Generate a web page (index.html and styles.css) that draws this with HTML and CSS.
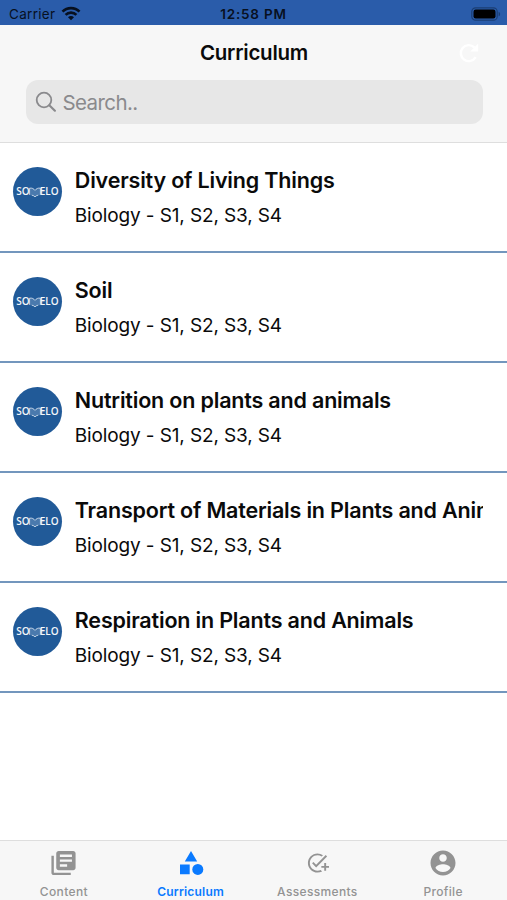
FILE: index.html
```html
<!DOCTYPE html>
<html lang="en">
<head>
<meta charset="utf-8">
<title>Curriculum</title>
<link rel="stylesheet" href="styles.css">
</head>
<body>
<svg width="0" height="0" class="defs">
  <symbol id="book" viewBox="0 0 13 12">
    <path d="M.6 1.300c2.800-.5 4.500.6 5.900 2.400 1.400-1.800 3.100-2.900 5.900-2.400v7.600c-2.500-.1-4.500.5-5.900 1.900-1.400-1.400-3.400-2-5.900-1.900z" fill="#4a79ad"/>
    <path d="M.6 8.500V1.300c2.800-.5 4.500.6 5.900 2.400 1.400-1.800 3.100-2.900 5.900-2.400v7.200M3 8.900c1.500.2 2.600.8 3.500 1.900.9-1.100 2-1.700 3.500-1.900" fill="none" stroke="#dce6f0" stroke-width=".9"/>
  </symbol>
</svg>
<div class="app">
  <div class="status">
    <div class="carrier">Carrier
      <svg width="20" height="15" viewBox="0 0 20 15" fill="none" stroke="#07101f" stroke-width="2.700"><path d="M1.500 5.600a12 12 0 0 1 17 0M4.600 8.900a7.600 7.600 0 0 1 10.800 0"/><path d="M10 14.200l-3-3a4.200 4.200 0 0 1 6 0z" fill="#07101f" stroke="none"/></svg>
    </div>
    <div class="time">12:58 PM</div>
    <svg class="battery" width="30" height="14" viewBox="0 0 30 14"><rect x=".8" y=".8" width="25.400" height="12.400" rx="3.800" fill="none" stroke="#1b3e74" stroke-width="1.200"/><rect x="2.500" y="2.500" width="22" height="9" rx="2.200" fill="#000"/><path d="M27.600 4.700c2 .8 2 3.800 0 4.600z" fill="#1b3e74"/></svg>
  </div>
  <header class="header">
    <div class="titlebar">
      <h1>Curriculum</h1>
      <svg class="refresh" width="22" height="22" viewBox="0 0 22 22"><path d="M17.700 15.200A8 8 0 1 1 16.300 5.300" fill="none" stroke="#fff" stroke-width="2.400"/><path d="M20.200 1.500v8h-8z" fill="#fff"/></svg>
    </div>
    <div class="search">
      <svg width="22" height="22" viewBox="0 0 22 22" fill="none" stroke="#8a8a8d" stroke-width="1.800" stroke-linecap="round"><circle cx="9" cy="9" r="7.300"/><path d="M14.300 14.300l5.600 5.400" stroke-width="2.200"/></svg>
      <span>Search..</span>
    </div>
  </header>
  <main class="list">
    <div class="row"><div class="avatar"><span>SO</span><svg><use href="#book"/></svg><span>ELO</span></div><div class="info"><h2>Diversity of Living Things</h2><p>Biology - S1, S2, S3, S4</p></div></div>
    <div class="row"><div class="avatar"><span>SO</span><svg><use href="#book"/></svg><span>ELO</span></div><div class="info"><h2>Soil</h2><p>Biology - S1, S2, S3, S4</p></div></div>
    <div class="row"><div class="avatar"><span>SO</span><svg><use href="#book"/></svg><span>ELO</span></div><div class="info"><h2>Nutrition on plants and animals</h2><p>Biology - S1, S2, S3, S4</p></div></div>
    <div class="row"><div class="avatar"><span>SO</span><svg><use href="#book"/></svg><span>ELO</span></div><div class="info"><h2>Transport of Materials in Plants and Animals</h2><p>Biology - S1, S2, S3, S4</p></div></div>
    <div class="row"><div class="avatar"><span>SO</span><svg><use href="#book"/></svg><span>ELO</span></div><div class="info"><h2>Respiration in Plants and Animals</h2><p>Biology - S1, S2, S3, S4</p></div></div>
  </main>
  <nav class="tabs">
    <div class="tab">
      <svg width="29" height="30" viewBox="0 0 24 24" fill="currentColor"><path d="M4 6H2v14c0 1.100.9 2 2 2h14v-2H4V6zm16-4H8c-1.100 0-2 .9-2 2v12c0 1.100.9 2 2 2h12c1.100 0 2-.9 2-2V4c0-1.100-.9-2-2-2zm-1 9H9V9h10v2zm-4 4H9v-2h6v2zm4-8H9V5h10v2z"/></svg>
      <span>Content</span>
    </div>
    <div class="tab active">
      <svg width="30" height="30" viewBox="0 0 30 30" fill="currentColor"><path d="M15 3l6.200 10.600H8.800zM4 16.500h9.700v9.700H4z"/><circle cx="21.800" cy="21.400" r="5.500"/></svg>
      <span>Curriculum</span>
    </div>
    <div class="tab">
      <svg width="23" height="23" viewBox="0 0 24 24" fill="currentColor"><path d="M22 5.180L10.590 16.600l-4.240-4.240 1.410-1.410 2.830 2.830 10-10L22 5.180zM12 20c-4.410 0-8-3.590-8-8s3.590-8 8-8c1.570 0 3.040.46 4.280 1.250l1.450-1.450A10.020 10.020 0 0 0 12 2C6.480 2 2 6.480 2 12s4.480 10 10 10c1.730 0 3.360-.44 4.780-1.220l-1.500-1.500c-1 .46-2.110.72-3.280.72zm7-5h-3v2h3v3h2v-3h3v-2h-3v-3h-2v3z"/></svg>
      <span>Assessments</span>
    </div>
    <div class="tab">
      <svg width="30" height="30" viewBox="0 0 24 24" fill="currentColor"><path d="M12 2C6.480 2 2 6.480 2 12s4.480 10 10 10 10-4.480 10-10S17.520 2 12 2zm0 3c1.660 0 3 1.340 3 3s-1.340 3-3 3-3-1.340-3-3 1.340-3 3-3zm0 14.200c-2.500 0-4.710-1.280-6-3.220.03-1.990 4-3.080 6-3.080 1.990 0 5.970 1.090 6 3.080-1.290 1.940-3.500 3.220-6 3.220z"/></svg>
      <span>Profile</span>
    </div>
  </nav>
</div>
</body>
</html>
```
FILE: styles.css
```css
* { box-sizing: border-box; }
body { margin: 0; font-family: Inter, "Liberation Sans", sans-serif; color: #0a0a0a; }
.defs { position: absolute; }
.app { width: 507px; height: 900px; display: flex; flex-direction: column; background: #fff; overflow: hidden; }
.status { height: 25px; background: #2a5caa; display: grid; grid-template-columns: 1fr auto 1fr; align-items: center; padding: 2px 6px 0 9px; color: #07101f; font-size: 13.500px; }
.carrier { display: flex; align-items: center; gap: 6px; letter-spacing: .3px; }
.time { font-weight: 600; font-size: 13.500px; letter-spacing: .8px; margin-right: 3px; }
.battery { justify-self: end; }
.header { height: 118px; background: #f7f7f7; border-bottom: 1px solid #dedede; padding: 0 24.500px 0 25.500px; }
.titlebar { height: 55px; display: grid; grid-template-columns: 1fr auto 1fr; align-items: center; }
h1 { grid-column: 2; margin: 0; font-size: 20.500px; font-weight: 600; letter-spacing: -.25px; }
.refresh { justify-self: end; margin-right: 3px; }
.search { height: 44px; border-radius: 12px; background: #e7e7e7; color: #8a8a8d; display: flex; align-items: center; gap: 6px; padding-left: 9px; font-size: 20.500px; letter-spacing: -.6px; }
.row { height: 110px; border-bottom: 2px solid #7396bd; display: flex; padding: 24px 24px 0 13px; gap: 12.800px; }
.avatar { width: 49px; height: 49px; flex: none; border-radius: 50%; background: #215a98; color: #f4f7fa; display: flex; align-items: center; justify-content: center; font: 600 10px/14px "Open Sans", sans-serif; }
.avatar span { position: relative; top: -.5px; }
.avatar svg { width: 12px; height: 11px; margin: 2px -1px 0; flex: none; }
.info { flex: 1; min-width: 0; margin-top: -2px; }
h2 { margin: 0; height: 30px; line-height: 30px; font-size: 21.500px; font-weight: 600; letter-spacing: -.18px; white-space: nowrap; overflow: hidden; }
p { margin: 6px 0 0; line-height: 30px; font-size: 19px; letter-spacing: -.13px; }
.tabs { margin-top: auto; height: 60px; border-top: 1px solid #dedede; background: #f7f7f7; display: grid; grid-template-columns: repeat(4, 1fr); color: #939393; }
.tab { display: flex; flex-direction: column; align-items: center; padding-top: 7px; }
.tab svg { height: 30px; margin-left: 1px; }
.tab span { margin: 5.500px 0 0 1px; line-height: 16px; font-size: 12px; font-weight: 500; letter-spacing: .35px; }
.tab:last-child svg, .tab:last-child span { margin-left: -1px; }
.tab.active { color: #0a7aff; }
.tab.active span { font-weight: 600; letter-spacing: .2px; }
```
